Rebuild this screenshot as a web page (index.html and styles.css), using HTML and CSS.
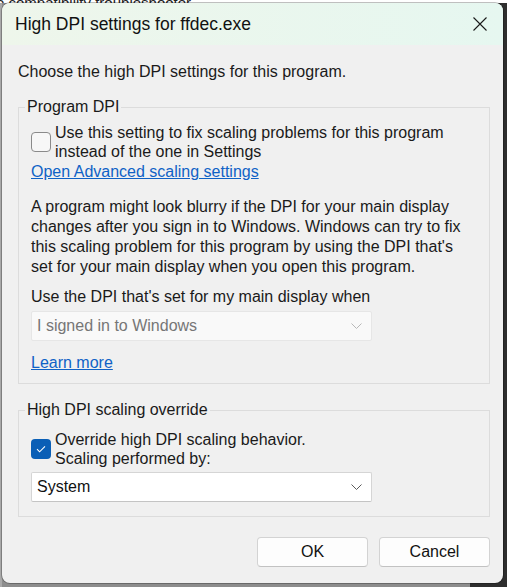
FILE: index.html
```html
<!DOCTYPE html>
<html>
<head>
<meta charset="utf-8">
<link rel="stylesheet" href="styles.css">
</head>
<body>
<div class="backdrop">e compatibility troubleshooter.</div>
<div class="dialog">
  <div class="titlebar">
    <span class="title">High DPI settings for ffdec.exe</span>
    <svg class="close" width="16" height="16" viewBox="0 0 16 16"><path d="M1.5 1.5L14.5 14.5M14.5 1.5L1.5 14.5" stroke="#1a1a1a" stroke-width="1.1" fill="none"/></svg>
  </div>
  <div class="content">
    <p class="intro">Choose the high DPI settings for this program.</p>
    <fieldset class="group group-dpi">
      <legend>Program DPI</legend>
      <label class="check-row">
        <span class="box"></span>
        <span class="check-text">Use this setting to fix scaling problems for this program<br>instead of the one in Settings</span>
      </label>
      <a class="link link-adv" href="#">Open Advanced scaling settings</a>
      <p class="para">A program might look blurry if the DPI for your main display<br>changes after you sign in to Windows. Windows can try to fix<br>this scaling problem for this program by using the DPI that's<br>set for your main display when you open this program.</p>
      <p class="label">Use the DPI that's set for my main display when</p>
      <div class="select disabled">
        <span>I signed in to Windows</span>
        <svg class="chev" width="11" height="6" viewBox="0 0 11 6"><path d="M0.5 0.5L5.5 5.5L10.5 0.5" stroke="#b8b8b8" stroke-width="1" fill="none"/></svg>
      </div>
      <a class="link link-learn" href="#">Learn more</a>
    </fieldset>
    <fieldset class="group group-override">
      <legend>High DPI scaling override</legend>
      <label class="check-row">
        <span class="box checked"><svg width="20" height="20" viewBox="0 0 20 20"><path d="M6 10.2L8.6 12.8L14 7.4" stroke="#fff" stroke-width="1.1" fill="none"/></svg></span>
        <span class="check-text">Override high DPI scaling behavior.<br>Scaling performed by:</span>
      </label>
      <div class="select">
        <span>System</span>
        <svg class="chev" width="11" height="6" viewBox="0 0 11 6"><path d="M0.5 0.5L5.5 5.5L10.5 0.5" stroke="#5a5a5a" stroke-width="1" fill="none"/></svg>
      </div>
    </fieldset>
    <div class="buttons">
      <button class="btn">OK</button>
      <button class="btn">Cancel</button>
    </div>
  </div>
</div>
</body>
</html>
```

FILE: styles.css
```css
html, body {
  margin: 0;
  padding: 0;
}
body {
  width: 507px;
  height: 587px;
  overflow: hidden;
  position: relative;
  background: linear-gradient(90deg, #a9a9a9 0 2px, #8d8d8d 2px 470px, #2e2e2e 470px);
  font-family: "Liberation Sans", Arial, sans-serif;
  color: #1a1a1a;
}
.backdrop {
  height: 3px;
  background: #fff;
  overflow: hidden;
  font-size: 15px;
  line-height: 6px;
  color: #222;
  text-indent: -4px;
}
.dialog {
  position: absolute;
  left: 2px;
  top: 3px;
  width: 501px;
  height: 580px;
  background: #f0f0f0;
  border-radius: 8px;
  overflow: hidden;
  box-shadow: 0 0 0 1px rgba(0,0,0,0.25);
}
.titlebar {
  height: 42px;
  display: flex;
  align-items: center;
  justify-content: space-between;
  padding: 0 15px 0 13px;
  background: linear-gradient(90deg, #eef6eb, #e6f7f0);
}
.title {
  font-size: 17.5px;
  color: #111;
}
.close {
  display: block;
}
.content {
  padding: 0 13px 0 16px;
  font-size: 16px;
  line-height: 20px;
}
.intro {
  margin: 17px 0 0 0;
}
.group {
  margin: 15px 0 0 0;
  padding: 0 12px 0 12px;
  border: 1px solid #dcdcdc;
  min-width: 0;
}
.group-override {
  margin-top: 16px;
}
.group legend {
  padding: 0 2px;
  margin-left: -6px;
  line-height: 20px;
}
.check-row {
  display: flex;
  align-items: center;
  gap: 4px;
  margin-top: 6px;
}
.group-override .check-row {
  margin-top: 10px;
}
.box {
  flex: none;
  width: 18px;
  height: 18px;
  border: 1px solid #8a8a8a;
  border-radius: 4px;
  background: #f7f7f7;
  box-sizing: content-box;
  display: flex;
  align-items: center;
  justify-content: center;
}
.box.checked {
  width: 20px;
  height: 20px;
  border: none;
  background: #0a5fb6;
}
.box.checked svg {
  display: block;
}
.check-text {
  line-height: 19px;
}
.link {
  display: block;
  color: #0f62c6;
  text-decoration: underline;
  width: max-content;
}
.link-adv {
  margin-top: 1px;
}
.para {
  margin: 15px 0 0 0;
}
.label {
  margin: 10px 0 0 0;
}
.select {
  margin-top: 4px;
  width: 341px;
  height: 30px;
  box-sizing: border-box;
  display: flex;
  align-items: center;
  justify-content: space-between;
  padding: 0 9px 0 5px;
  background: #fff;
  border: 1px solid #d5d5d5;
  border-bottom-color: #c4c4c4;
  border-radius: 2px;
  color: #111;
}
.select.disabled {
  background: #f9f9f9;
  border-color: #e6e6e6;
  color: #767676;
}
.chev {
  display: block;
}
.link-learn {
  margin-top: 12px;
  margin-bottom: 10px;
}
.group-override .select {
  margin-top: 4px;
  margin-bottom: 14px;
}
.buttons {
  display: flex;
  justify-content: flex-end;
  gap: 11px;
  margin-top: 20px;
}
.btn {
  width: 111px;
  height: 30px;
  background: #fdfdfd;
  border: 1px solid #d3d3d3;
  border-bottom-color: #c2c2c2;
  border-radius: 4px;
  font-family: "Liberation Sans", Arial, sans-serif;
  font-size: 16px;
  color: #111;
  padding: 0;
}
```
